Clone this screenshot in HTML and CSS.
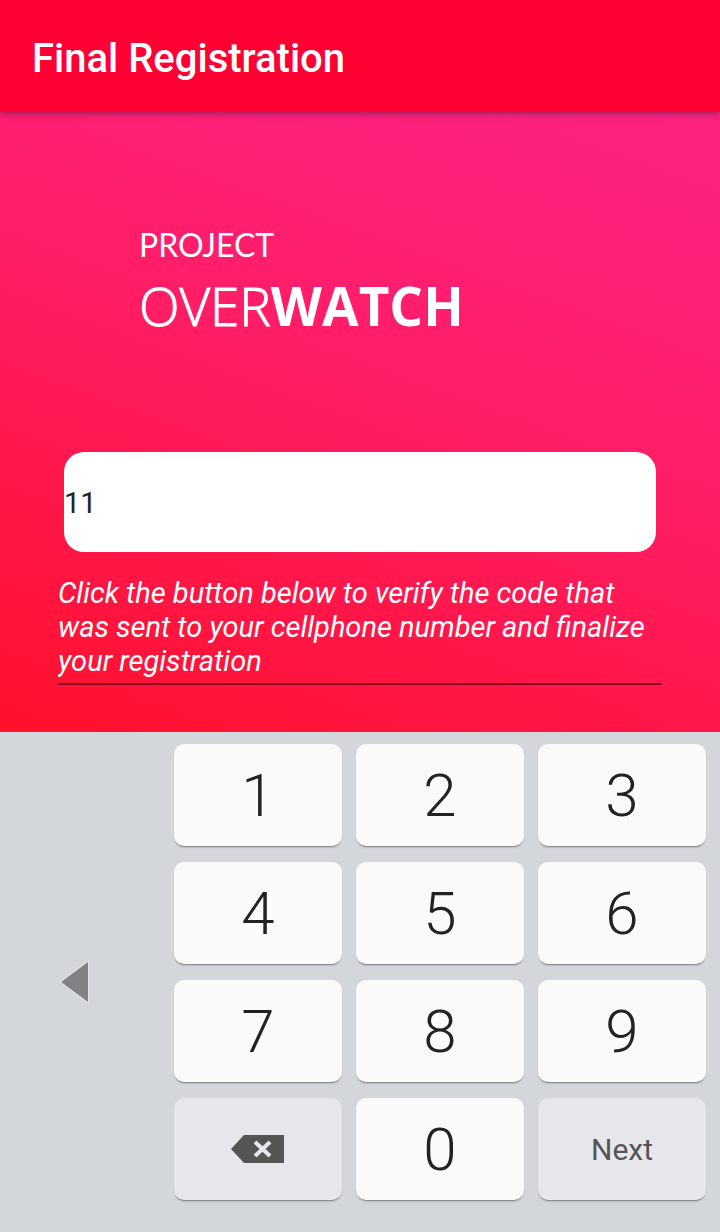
FILE: index.html
```html
<!DOCTYPE html>
<html lang="en">
<head>
<meta charset="utf-8">
<meta name="viewport" content="width=device-width, initial-scale=1">
<title>Final Registration</title>
<link rel="stylesheet" href="styles.css">
</head>
<body>
<header class="app-bar">
  <h1 class="app-title">Final Registration</h1>
</header>
<main class="screen">
  <div class="brand">
    <span class="brand-top">PROJECT</span>
    <span class="brand-main"><span class="brand-light">OVER</span><b class="brand-strong">WATCH</b></span>
  </div>
  <form class="form">
    <input class="code" type="text" inputmode="numeric" value="11" aria-label="Verification code">
    <textarea class="hint" rows="3" readonly spellcheck="false" aria-label="Instructions">Click the button below to verify the code that was sent to your cellphone number and finalize your registration</textarea>
  </form>
</main>
<section class="keyboard" aria-label="Numeric keyboard">
  <button class="collapse" type="button" aria-label="Move keyboard left">
    <svg class="collapse-icon" width="32" height="44" viewBox="0 0 32 44" aria-hidden="true"><path d="M29 2v40L2 22z" fill="#808284" stroke="#e4e6e9" stroke-width="2" paint-order="stroke"/></svg>
  </button>
  <div class="keys">
    <button class="key" type="button">1</button>
    <button class="key" type="button">2</button>
    <button class="key" type="button">3</button>
    <button class="key" type="button">4</button>
    <button class="key" type="button">5</button>
    <button class="key" type="button">6</button>
    <button class="key" type="button">7</button>
    <button class="key" type="button">8</button>
    <button class="key" type="button">9</button>
    <button class="key key-action" type="button" aria-label="Delete">
      <svg width="54" height="28" viewBox="0 0 54 28" aria-hidden="true"><path d="M0 14 13 0H53V28H13z" fill="#555"/><path d="m24 7 15 14m0-14L24 21" stroke="#e6e7eb" stroke-width="4" fill="none"/></svg>
    </button>
    <button class="key" type="button">0</button>
    <button class="key key-action" type="button">Next</button>
  </div>
</section>
</body>
</html>
```
FILE: styles.css
```css
* {
  box-sizing: border-box;
}

body {
  margin: 0;
  min-height: 100vh;
  display: flex;
  flex-direction: column;
  font-family: Roboto, sans-serif;
  background: #d3d7dc;
}

.app-bar {
  z-index: 1;
  padding: 35px 32px 29px;
  background: #ff0033;
  box-shadow: 0 1px 7px rgba(60, 30, 70, 0.6);
}

.app-title {
  margin: 0;
  font-size: 40px;
  line-height: 48px;
  font-weight: 500;
  color: #fff;
}

.screen {
  flex: 1;
  display: flex;
  flex-direction: column;
  padding: 112px 58px 47px;
  background: linear-gradient(20deg, #ff112b 0%, #ff174b 30%, #ff1d66 56%, #ff2079 80%, #fc237e 100%);
}

.brand {
  display: flex;
  flex-direction: column;
  padding-left: 81px;
  font-family: "Open Sans", sans-serif;
  color: #fff;
}

.brand-top {
  font-family: Lato, sans-serif;
  font-size: 32px;
  line-height: 42px;
}

.brand-main {
  font-size: 53px;
  line-height: 80px;
}

.brand-light {
  font-weight: 300;
  -webkit-text-stroke: 1px #fff;
}

.brand-strong {
  font-weight: 700;
}

.form {
  display: flex;
  flex-direction: column;
  gap: 24px;
  margin-top: auto;
}

.code {
  height: 100px;
  margin: 0 6px;
  padding: 2px 0 0;
  border: 0;
  border-radius: 20px;
  background: #fff;
  font-family: inherit;
  font-size: 29px;
  color: #222;
}

.hint {
  display: block;
  width: 100%;
  padding: 0 0 5px;
  border: 0;
  border-bottom: 2px solid #880a22;
  background: none;
  resize: none;
  overflow: hidden;
  font-family: inherit;
  font-size: 29px;
  line-height: 34px;
  font-style: italic;
  color: #fff;
}

.keyboard {
  display: grid;
  grid-template-columns: 150px 1fr;
  gap: 24px;
  padding: 12px 14px 32px 0;
  background: #d3d7dc;
}

.collapse {
  display: flex;
  align-items: center;
  justify-content: center;
  padding: 20px 0 0;
  border: 0;
  background: none;
}

.keys {
  display: grid;
  grid-template-columns: repeat(3, 1fr);
  gap: 16px 14px;
}

.key {
  display: flex;
  align-items: center;
  justify-content: center;
  height: 102px;
  padding: 0;
  border: 0;
  border-radius: 10px;
  background: #fafafa;
  box-shadow: 0 2px 2px -1px rgba(0, 0, 0, 0.45);
  font-family: inherit;
  font-size: 60px;
  font-weight: 300;
  color: #222;
}

.key-action {
  background: #e6e7eb;
  font-size: 30px;
  font-weight: 400;
  color: #555;
}
```
